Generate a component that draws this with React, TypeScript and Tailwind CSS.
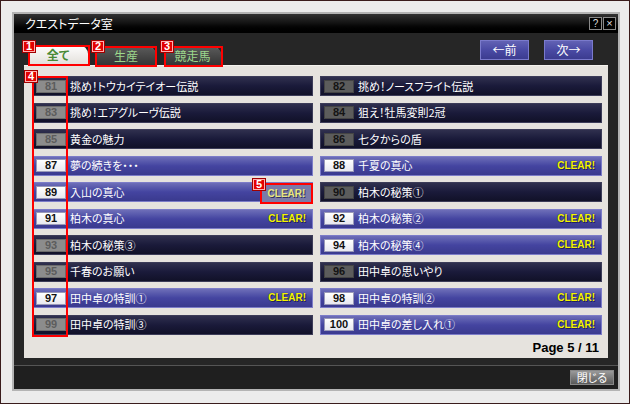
import React from 'react';

type Quest = { no: number; title: string; state: 'locked' | 'open' | 'clear' };

const left: Quest[] = [
  { no: 81, title: '挑め！トウカイテイオー伝説', state: 'locked' },
  { no: 83, title: '挑め！エアグルーヴ伝説', state: 'locked' },
  { no: 85, title: '黄金の魅力', state: 'locked' },
  { no: 87, title: '夢の続きを・・・', state: 'open' },
  { no: 89, title: '入山の真心', state: 'clear' },
  { no: 91, title: '柏木の真心', state: 'clear' },
  { no: 93, title: '柏木の秘策③', state: 'locked' },
  { no: 95, title: '千春のお願い', state: 'locked' },
  { no: 97, title: '田中卓の特訓①', state: 'clear' },
  { no: 99, title: '田中卓の特訓③', state: 'locked' },
];

const right: Quest[] = [
  { no: 82, title: '挑め！ノースフライト伝説', state: 'locked' },
  { no: 84, title: '狙え！牡馬変則2冠', state: 'locked' },
  { no: 86, title: '七夕からの盾', state: 'locked' },
  { no: 88, title: '千夏の真心', state: 'clear' },
  { no: 90, title: '柏木の秘策①', state: 'locked' },
  { no: 92, title: '柏木の秘策②', state: 'clear' },
  { no: 94, title: '柏木の秘策④', state: 'clear' },
  { no: 96, title: '田中卓の思いやり', state: 'locked' },
  { no: 98, title: '田中卓の特訓②', state: 'clear' },
  { no: 100, title: '田中卓の差し入れ①', state: 'clear' },
];

const jp = "font-['Noto_Sans_CJK_JP','Noto_Sans',sans-serif] [font-feature-settings:'palt']";
const latin = "font-['Liberation_Sans',Arial,sans-serif]";

const Label = ({ n, className }: { n: number; className: string }) => (
  <div
    className={`absolute w-[14px] h-[13px] bg-[#e40000] border border-[#a00000] shadow-[inset_0_0_0_1px_#ffb0b0] flex items-center justify-center text-white text-[11px] leading-none font-bold ${latin} ${className}`}
  >
    {n}
  </div>
);

const Row = ({ q, lightLocked }: { q: Quest; lightLocked: boolean }) => {
  const bright = q.state !== 'locked';
  return (
    <div
      className={`h-[20px] flex items-center border ${
        bright
          ? 'border-[#7c7cc8] bg-gradient-to-b from-[#6e6eb8] via-[#4444a0] to-[#3a3a8e]'
          : 'border-[#3c3c58] bg-gradient-to-b from-[#30304e] via-[#1a1a3a] to-[#111128]'
      }`}
    >
      <div
        className={`ml-[3px] w-[30px] h-[13px] flex items-center justify-center text-[11px] leading-none font-bold ${latin} ${
          bright
            ? 'bg-gradient-to-b from-[#ffffff] to-[#e8e8f0] border border-[#9a9ab8] text-[#111]'
            : lightLocked
            ? 'bg-[#8c8c8c] border border-[#6c6c6c] text-[#5c5c5c]'
            : 'bg-[#5c5c5c] border border-[#444] text-[#141414]'
        }`}
      >
        {q.no}
      </div>
      <span className={`ml-[4px] text-[11px] leading-none text-white flex-1 ${jp}`}>{q.title}</span>
      {q.state === 'clear' && (
        <span
          className={`mr-[6px] text-[10px] leading-none font-bold text-[#f4f400] ${latin} [text-shadow:0_0_1px_#202060,1px_1px_0_#202060]`}
        >
          CLEAR!
        </span>
      )}
    </div>
  );
};

export default function App() {
  return (
    <div className="relative w-[630px] h-[404px] bg-[#ececec] border border-[#3a1c1c] overflow-hidden">
      <div className="ml-[11px] mt-[11px] w-[608px] h-[379px] border-2 border-[#b4b4b4] flex flex-col bg-[#262626]">
        {/* title bar */}
        <div className="h-[19px] bg-gradient-to-b from-[#333] via-[#111] to-[#000] flex items-center pl-[11px] pr-[2px]">
          <span className={`text-white text-[12px] leading-none ${jp}`}>クエストデータ室</span>
          <div className="ml-auto flex gap-[1px]">
            <div className={`w-[13px] h-[13px] border border-[#8a8a8a] bg-black text-[#ddd] text-[10px] leading-none flex items-center justify-center ${latin}`}>?</div>
            <div className={`w-[13px] h-[13px] border border-[#8a8a8a] bg-black text-[#ddd] text-[11px] leading-none flex items-center justify-center ${latin}`}>×</div>
          </div>
        </div>

        {/* tabs + paging */}
        <div className="h-[32px] flex justify-between">
          <div className="flex items-end pl-[14px] gap-[8px]">
            <div className={`w-[60px] h-[20px] rounded-tl-[4px] rounded-tr-[9px] bg-gradient-to-b from-[#ffffff] to-[#e2dfda] flex items-center justify-center text-[12px] font-bold text-[#4a8a36] ${jp}`}>
              全て
            </div>
            <div className={`w-[60px] h-[19px] rounded-tl-[4px] rounded-tr-[9px] bg-gradient-to-b from-[#5a5a5a] to-[#353535] border-t border-[#777] flex items-center justify-center text-[12px] text-[#9cd88c] ${jp}`}>
              生産
            </div>
            <div className={`w-[57px] h-[19px] rounded-tl-[4px] rounded-tr-[9px] bg-gradient-to-b from-[#5a5a5a] to-[#353535] border-t border-[#777] flex items-center justify-center text-[12px] text-[#9cd88c] ${jp}`}>
              競走馬
            </div>
          </div>
          <div className="flex gap-[15px] pr-[25px] pt-[7px]">
            {['←前', '次→'].map((t) => (
              <div
                key={t}
                className={`w-[49px] h-[20px] border border-[#7a7acc] bg-gradient-to-b from-[#6262b4] via-[#4a4aa4] to-[#3c3c90] flex items-center justify-center text-white text-[12px] ${jp}`}
              >
                {t}
              </div>
            ))}
          </div>
        </div>

        {/* panel */}
        <div className="mx-[10px] h-[293px] bg-[#e6e3de] border-t border-[#f4f2ee] pl-[8px] pr-[6px] pt-[10px]">
          <div className="grid grid-cols-[281px_282px] gap-x-[7px]">
            <div className="flex flex-col gap-[6.5px]">
              {left.map((q) => (
                <Row key={q.no} q={q} lightLocked />
              ))}
            </div>
            <div className="flex flex-col gap-[6.5px]">
              {right.map((q) => (
                <Row key={q.no} q={q} lightLocked={false} />
              ))}
            </div>
          </div>
          <div className={`mt-[5px] pr-[3px] text-right text-[13px] leading-[16px] font-bold text-black ${latin}`}>
            Page 5 / 11
          </div>
        </div>

        {/* footer */}
        <div className="mt-[7px] flex-1 border-t border-[#555] bg-[#1f1f1f] flex justify-end items-start pt-[4px] pr-[4px]">
          <div className={`w-[44px] h-[15px] bg-gradient-to-b from-[#9a9a9a] to-[#5a5a5a] border border-[#888] flex items-center justify-center text-white text-[11px] leading-none ${jp}`}>
            閉じる
          </div>
        </div>
      </div>

      {/* annotation overlays */}
      <div className="absolute left-[27px] top-[44px] w-[62px] h-[21px] border-2 border-[#ff0000]" />
      <div className="absolute left-[94px] top-[45px] w-[62px] h-[21px] border-2 border-[#ff0000]" />
      <div className="absolute left-[163px] top-[45px] w-[59px] h-[21px] border-2 border-[#ff0000]" />
      <div className="absolute left-[31px] top-[75px] w-[36px] h-[261px] border-2 border-[#ff0000]" />
      <div className="absolute left-[259px] top-[182px] w-[53px] h-[21px] border-2 border-[#ff0000] bg-[#7a7aa8] flex items-center justify-center">
        <span className={`text-[10px] leading-none font-bold text-[#e8e880] ${latin} [text-shadow:1px_1px_0_#303060]`}>CLEAR!</span>
      </div>
      <Label n={1} className="left-[21px] top-[39px]" />
      <Label n={2} className="left-[90px] top-[39px]" />
      <Label n={3} className="left-[159px] top-[39px]" />
      <Label n={4} className="left-[23px] top-[69px]" />
      <Label n={5} className="left-[251px] top-[177px]" />
    </div>
  );
}
